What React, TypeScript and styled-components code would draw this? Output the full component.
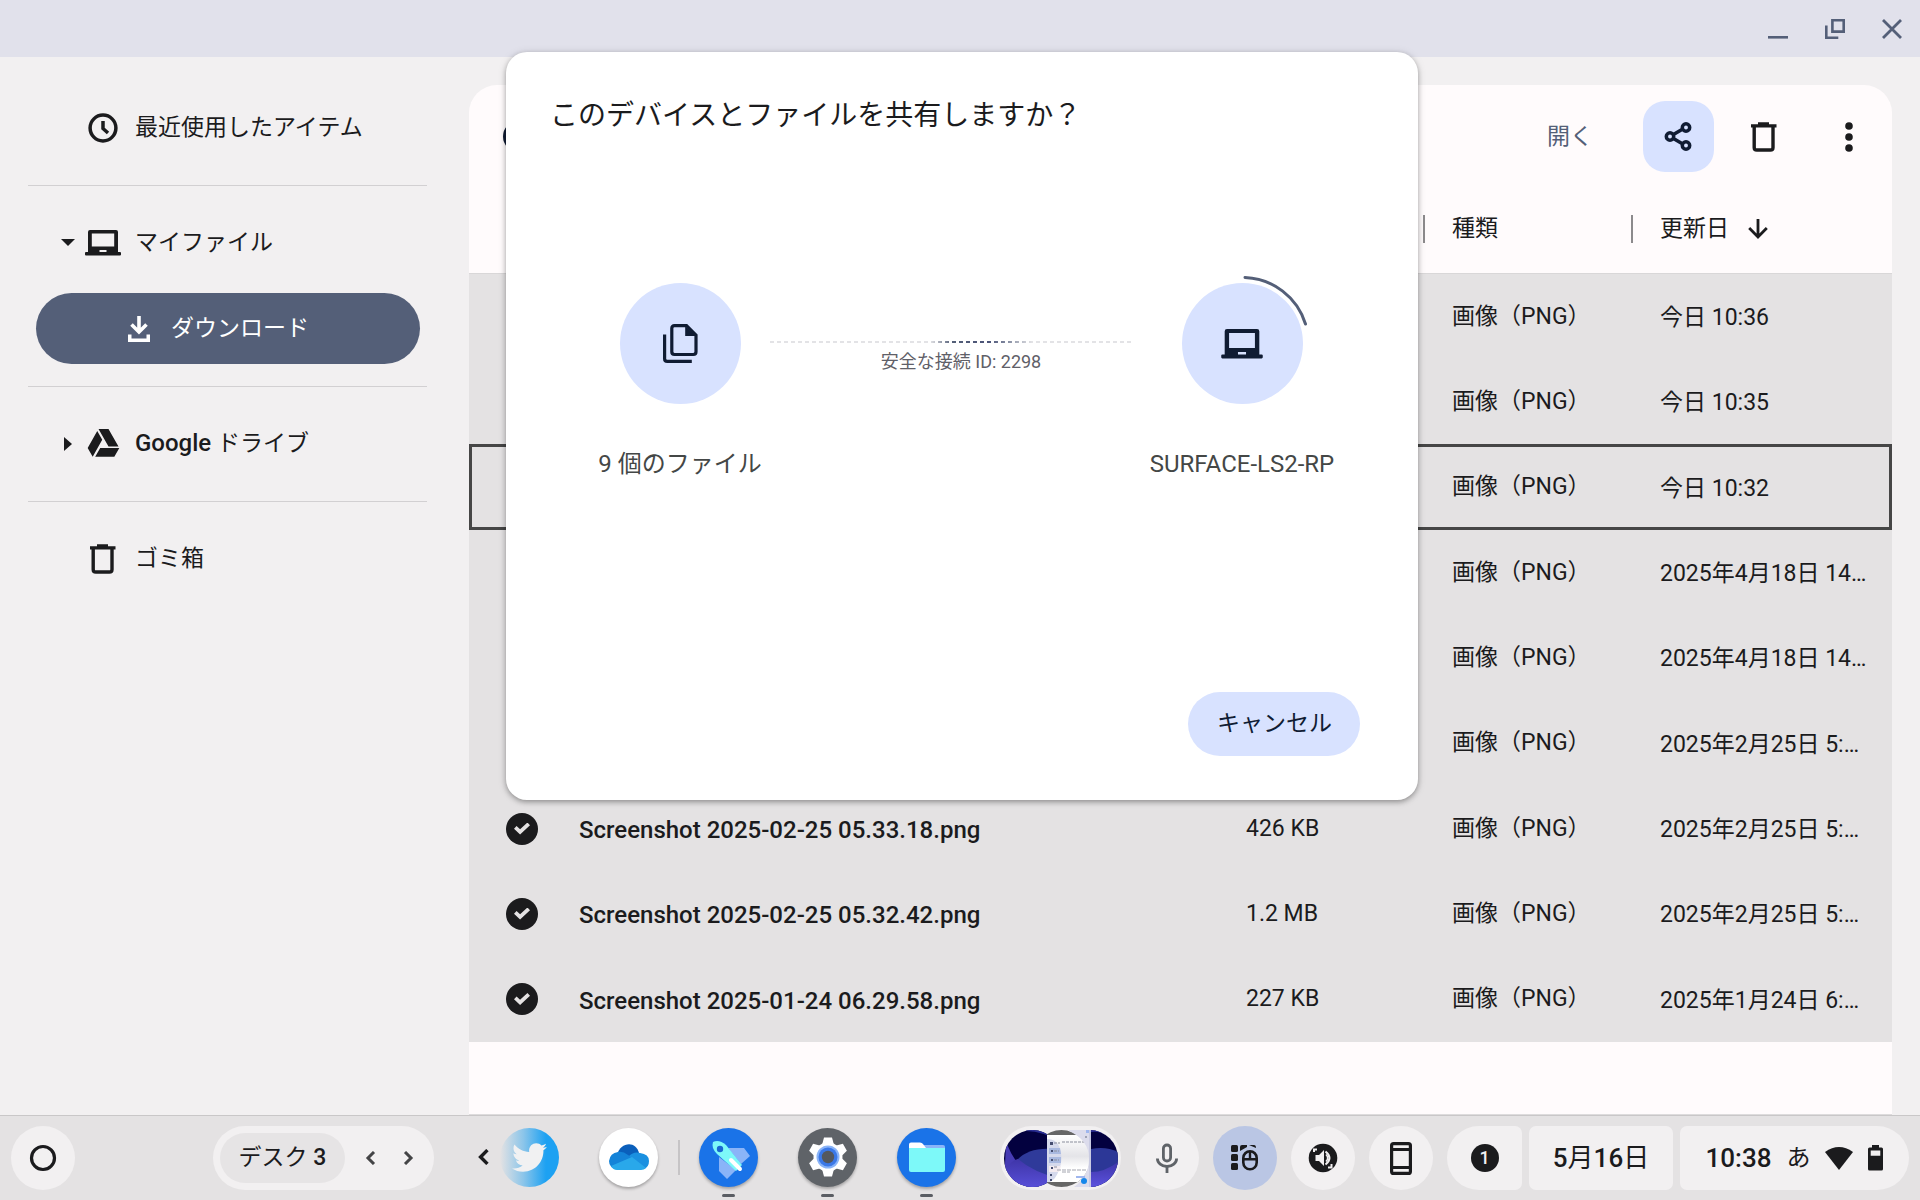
import React from "react";
import styled, { createGlobalStyle, css } from "styled-components";
import { FaTwitter } from "react-icons/fa";

const GlobalStyle = createGlobalStyle`
  *, *::before, *::after { box-sizing: border-box; }
  html, body { margin: 0; padding: 0; }
  body {
    background: #f2f0f1;
    color: #1b1b1d;
    font-family: Roboto, "Noto Sans CJK JP", sans-serif;
    font-size: 23px;
    line-height: 32px;
  }
  button {
    margin: 0; padding: 0; border: 0; background: none;
    color: inherit; font: inherit; cursor: pointer;
  }
  svg { display: block; flex: none; }
`;

/* ---------- window frame ---------- */

const Desktop = styled.div`
  position: relative;
  display: flex;
  flex-direction: column;
  min-height: 100vh;
  overflow: hidden;
`;

const TitleBar = styled.header`
  display: flex;
  justify-content: flex-end;
  height: 57px;
  background: #e1e1eb;
  color: #545f78;
`;

const WindowButton = styled.button`
  display: grid;
  place-items: center;
  width: 57px;
  height: 57px;
`;

const Body = styled.div`
  display: flex;
  flex: 1;
`;

/* ---------- sidebar ---------- */

const Sidebar = styled.nav`
  display: flex;
  flex-direction: column;
  flex: none;
  width: 469px;
  padding: 35px 42px 0 28px;
`;

const NavItem = styled.button<{ $nested?: boolean; $active?: boolean }>`
  display: flex;
  align-items: center;
  height: 71px;
  margin: 0 7px 0 8px;
  padding-left: ${(p) => (p.$nested ? 56 : 20)}px;
  border-radius: 36px;
  text-align: left;
  ${(p) =>
    p.$active &&
    css`
      margin-top: 15px;
      background: #545f78;
      color: #ffffff;
    `}
`;

const Expander = styled.span`
  display: grid;
  place-items: center;
  width: 24px;
  margin-right: 5px;
`;

const NavIcon = styled.span`
  display: grid;
  place-items: center;
  width: 36px;
  margin-right: 14px;
`;

const Divider = styled.hr`
  width: 100%;
  height: 1px;
  margin: 22px 0 21px;
  border: 0;
  background: #d2d0d2;
`;

const Medium = styled.span`
  font-weight: 500;
`;

const Brand = styled(Medium)`
  font-size: 24px;
`;

/* ---------- file panel ---------- */

const Panel = styled.main`
  flex: 1;
  min-width: 0;
  margin: 28px 28px 0 0;
  border-radius: 28px 28px 0 0;
  border-bottom: 1px solid #dddbdc;
  background: #fffbfc;
`;

const Toolbar = styled.div`
  display: flex;
  align-items: center;
  gap: 14px;
  padding: 16px 8px 12px 34px;
`;

const SelectionIcon = styled.span`
  margin-right: auto;
  color: #101c33;
`;

const OpenButton = styled.button`
  padding: 0 36px;
  color: #545f78;
`;

const ToolButton = styled.button<{ $active?: boolean }>`
  display: grid;
  place-items: center;
  width: 71px;
  height: 71px;
  border-radius: 22px;
  background: ${(p) => (p.$active ? "#d8e2ff" : "transparent")};
  color: ${(p) => (p.$active ? "#101c33" : "#1b1b1d")};
`;

const FileTable = styled.table`
  width: 100%;
  border-collapse: separate;
  border-spacing: 0;
  table-layout: fixed;
`;

const Col = styled.col<{ $width?: number }>`
  width: ${(p) => (p.$width ? `${p.$width}px` : "auto")};
`;

const HeadCell = styled.th`
  height: 90px;
  padding: 0;
  border-bottom: 1px solid #d9d7d8;
  font-weight: 400;
  text-align: left;
`;

const HeadContent = styled.div`
  display: flex;
  align-items: center;
  gap: 19px;
`;

const ResizeHandle = styled.span`
  width: 2px;
  height: 28px;
  margin: 0 27px 0 auto;
  background: #8c8a8c;
`;

const FileRow = styled.tr<{ $focused?: boolean }>`
  height: 85px;
  background: #e4e2e3;
  &:nth-child(3n) { height: 86px; }
  ${(p) =>
    p.$focused &&
    css`
      outline: 3px solid #464646;
      outline-offset: -3px;
    `}
`;

const Cell = styled.td`
  padding: 0;
  overflow: hidden;
  text-overflow: ellipsis;
  white-space: nowrap;
`;

const NameCell = styled(Cell)`
  padding-top: 3px;
  font-size: 24px;
  font-weight: 500;
`;

const DateCell = styled(Cell)`
  padding: 3px 24px 0 0;
`;

const RowCheck = styled.input`
  appearance: none;
  display: grid;
  place-items: center;
  width: 32px;
  height: 32px;
  margin: 0 0 0 37px;
  border-radius: 50%;
  background: #1b1b1d;
  &::after {
    content: "";
    width: 16px;
    height: 12px;
    background: #e4e2e3;
    clip-path: polygon(0 52%, 16% 30%, 38% 56%, 84% 0, 100% 22%, 38% 100%);
  }
`;

/* ---------- share dialog ---------- */

const Dialog = styled.section`
  position: absolute;
  top: 52px;
  left: calc(50% - 454px);
  display: flex;
  flex-direction: column;
  width: 912px;
  height: 748px;
  padding: 46px 58px 44px 44px;
  border-radius: 21px;
  background: #ffffff;
  box-shadow: 0 2px 5px rgba(0, 0, 0, 0.3), 0 1px 10px rgba(0, 0, 0, 0.12);
`;

const DialogTitle = styled.h1`
  margin: 0;
  font-size: 28px;
  font-weight: 400;
  line-height: 36px;
`;

const Transfer = styled.div`
  display: flex;
  justify-content: space-between;
  margin-top: 149px;
  padding: 0 12px 0 24px;
`;

const Endpoint = styled.div`
  display: flex;
  flex-direction: column;
  align-items: center;
  gap: 44px;
  width: 212px;
  color: #444746;
  font-size: 24px;
  white-space: nowrap;
`;

const Disc = styled.div`
  position: relative;
  display: grid;
  place-items: center;
  width: 121px;
  height: 121px;
  border-radius: 50%;
  background: #d8e2ff;
  color: #101c33;
`;

const Progress = styled.svg`
  position: absolute;
  top: -9px;
  left: -9px;
`;

const Link = styled.div`
  display: flex;
  flex: 1;
  flex-direction: column;
  align-items: center;
  gap: 7px;
  margin: 0 -16px;
  padding-top: 58px;
  color: #5f6068;
  font-size: 18px;
  line-height: 24px;
`;

const DashLine = styled.div`
  align-self: flex-start;
  width: 364px;
  height: 2px;
  background: linear-gradient(90deg, #e3e3e6 44%, #545f78 50%, #4b5378 60%, #8e95a8 66%, #e3e3e6 72%);
  mask-image: repeating-linear-gradient(90deg, #000 0 4px, transparent 4px 7px);
`;

const CancelButton = styled.button`
  align-self: flex-end;
  height: 64px;
  margin-top: auto;
  padding: 0 28px 0 29px;
  border-radius: 32px;
  background: #d8e2ff;
  color: #101c33;
`;

/* ---------- shelf ---------- */

const Shelf = styled.footer`
  display: flex;
  align-items: center;
  height: 85px;
  padding: 0 11px;
  border-top: 1px solid #c9c7c8;
  background: #e4e2e3;
  font-size: 26px;
`;

const RoundButton = styled.button<{ $active?: boolean }>`
  display: grid;
  place-items: center;
  flex: none;
  width: 64px;
  height: 64px;
  border-radius: 50%;
  background: ${(p) => (p.$active ? "#bac6e4" : "#f2f0f1")};
`;

const DeskSwitcher = styled.div`
  display: flex;
  align-items: center;
  width: 221px;
  height: 64px;
  margin-left: 138px;
  padding-left: 7px;
  border-radius: 32px;
  background: #f2f0f1;
  color: #444446;
`;

const DeskName = styled.button`
  width: 125px;
  height: 50px;
  margin-right: 7px;
  border-radius: 25px;
  background: #e6e4e5;
  color: #1b1b1d;
  font-size: 23px;
`;

const ArrowButton = styled.button`
  display: grid;
  place-items: center;
  width: 37px;
  height: 50px;
`;

const Apps = styled.div`
  display: flex;
  align-items: center;
  gap: 40px;
  margin: 0 0 2px 42px;
`;

const Scrollable = styled.div`
  display: flex;
  align-items: center;
  gap: 8px;
`;

const AppButton = styled.button<{ $color: string }>`
  position: relative;
  display: grid;
  place-items: center;
  flex: none;
  width: 59px;
  height: 59px;
  border-radius: 50%;
  background: ${(p) => p.$color};
  box-shadow: 0 2px 3px rgba(0, 0, 0, 0.28);
`;

const FadedApp = styled(AppButton)`
  box-shadow: none;
`;

const Running = styled.span`
  position: absolute;
  bottom: -10px;
  left: 23px;
  width: 13px;
  height: 3px;
  border-radius: 2px;
  background: #5a5d63;
`;

const Pinned = styled.div`
  display: flex;
  align-items: center;
  gap: 19px;
  margin-left: -20px;
`;

const ShelfRule = styled.span`
  width: 2px;
  height: 35px;
  background: #c6c4c6;
`;

const Tray = styled.div`
  display: flex;
  align-items: center;
  gap: 14px;
  margin-left: auto;
`;

const HoldingSpace = styled.button`
  display: grid;
  place-items: center;
  width: 121px;
  height: 64px;
  border-radius: 32px;
  background: #f2f0f1;
`;

const StatusGroup = styled.div`
  display: flex;
  gap: 7px;
`;

const StatusButton = styled.button<{ $width: number; $side?: "start" | "end" }>`
  display: flex;
  align-items: center;
  justify-content: center;
  gap: 15px;
  width: ${(p) => p.$width}px;
  height: 64px;
  border-radius: ${(p) =>
    p.$side === "start" ? "32px 7px 7px 32px" : p.$side === "end" ? "7px 32px 32px 7px" : "7px"};
  background: #f2f0f1;
  white-space: nowrap;
`;

const ImeMode = styled.span`
  font-size: 24px;
`;

const Count = styled.span`
  display: grid;
  place-items: center;
  width: 28px;
  height: 28px;
  border-radius: 50%;
  background: #1b1b1d;
  color: #f2f0f1;
  font-size: 18px;
  font-weight: 500;
  line-height: 28px;
`;

/* ---------- icons ---------- */

const TrashIcon = () => (
  <svg width="30" height="30" viewBox="0 0 30 30" fill="none" stroke="currentColor" strokeWidth="3.4">
    <path d="M5.2 4v21.4q0 2.6 2.6 2.6h13.600q2.600 0 2.600-2.600V4" />
    <path d="M2 3.900h25.500M9 1.900h11" />
  </svg>
);

const LaptopIcon = ({ width = 36, height = 26 }: { width?: number; height?: number }) => (
  <svg width={width} height={height} viewBox="0 0 36 26" fill="currentColor" fillRule="evenodd">
    <path d="M5 0h26q2 0 2 2v20h2q1 0 1 1v1.500q0 1-1 1H1q-1 0-1-1V23q0-1 1-1h2V2q0-2 2-2zm1.800 3.500v13h22.400v-13zM14.500 20v2h7v-2z" />
  </svg>
);

const Chevron = ({ flip, size = 14, weight = 3 }: { flip?: boolean; size?: number; weight?: number }) => (
  <svg width={size} height={size} viewBox="0 0 14 14" fill="none" stroke="currentColor" strokeWidth={weight}>
    <path d={flip ? "M4 1l6 6-6 6" : "M10 1L4 7l6 6"} />
  </svg>
);

const CheckDisc = () => (
  <svg width="31" height="31" viewBox="0 0 31 31">
    <circle cx="15.500" cy="15.500" r="15.500" fill="currentColor" />
    <path d="M9 16l5 5 9-10" fill="none" stroke="#fffbfc" strokeWidth="3" />
  </svg>
);

const ShareIcon = () => (
  <svg width="30" height="30" viewBox="1 1 30 30" fill="none" stroke="currentColor" strokeWidth="3.500">
    <path d="M7 15.500L21.500 7M7 15.500l14.500 8.500" />
    <circle cx="7" cy="15.500" r="3.700" fill="#d8e2ff" />
    <circle cx="23" cy="6.500" r="3.700" fill="#d8e2ff" />
    <circle cx="23" cy="24.500" r="3.700" fill="#d8e2ff" />
  </svg>
);

const FilesIcon = () => (
  <svg width="35" height="39" viewBox="0 0 35 39" fill="none" stroke="currentColor" strokeWidth="3.200">
    <path d="M1.600 10.500v24.200q0 2.700 2.700 2.700h24.500" />
    <path d="M11.500 1.600h12l9.500 9.500v16.700q0 2.700-2.700 2.700H11.500q-2.700 0-2.700-2.700V4.300q0-2.700 2.700-2.700z" />
    <path d="M22.200 2v10H33z" fill="currentColor" stroke="none" />
  </svg>
);

const HoldingPreview = () => (
  <svg width="114" height="57" viewBox="0 0 114 57">
    <defs>
      <clipPath id="left"><circle cx="28.500" cy="28.500" r="28.500" /></clipPath>
      <clipPath id="middle"><circle cx="57.500" cy="28.500" r="28.500" /></clipPath>
      <clipPath id="right"><circle cx="85.500" cy="28.500" r="28.500" /></clipPath>
      <linearGradient id="violet" x1="0" y1="0" x2="0" y2="1">
        <stop offset="0" stopColor="#3f35a8" />
        <stop offset="1" stopColor="#5b52de" />
      </linearGradient>
      <linearGradient id="fade" x1="0" y1="0" x2="0" y2="1">
        <stop offset="0" stopColor="#ffffff" />
        <stop offset="0.450" stopColor="#e4e4e8" />
        <stop offset="0.700" stopColor="#ffffff" />
      </linearGradient>
    </defs>
    <g clipPath="url(#right)">
      <path d="M87 0h27v57H87z" fill="#03013f" />
      <path d="M87 2q16-2 27 14V0H87z" fill="#2c2f96" />
      <path d="M87 19q15-3 27 3v35H87z" fill="#2c3797" />
      <path d="M87 42q14 0 27-10v25H87z" fill="url(#violet)" />
    </g>
    <g clipPath="url(#left)">
      <path d="M0 0h57v57H0z" fill="#03013f" />
      <path d="M22 1q18 0 35 12V0H22z" fill="#2a2f96" />
      <path d="M13 30q14-15 44-10v37H13z" fill="#2f3a9a" />
      <path d="M2 12q10 26 34 45H0z" fill="#463bb4" />
      <path d="M0 40q8-10 14-11 16 14 44 20v12H0z" fill="url(#violet)" />
    </g>
    <g clipPath="url(#middle)">
      <path d="M43 0h43v57H43z" fill="#666666" />
      <path d="M43 5h43v47H43z" fill="url(#fade)" />
    </g>
    <path d="M43 9q9 0 12 7 5 12 0 24-3 9-9 12h-3z" fill="#d5d9ec" />
    <path d="M45 18h11l1 6H45zM45 27h12v6H45z" fill="#a9b9e0" />
    <path d="M45 36h12q-1 4-2 6H45z" fill="#f3ebf0" />
    <path d="M46 12h3v3h-3zM47 20h2v2h-2zM47 29h2v2h-2zM47 37h2v2h-2zM46 44h2v2h-2zM46 49h2v2h-2z" fill="#454d70" />
    <path d="M50 13h6M50 21h5M50 30h5M50 37h4M58 12h23" stroke="#8a8e9c" strokeWidth="1.200" strokeDasharray="3 1" />
    <path d="M53 40h29M58 42h8" stroke="#a4a6b0" strokeWidth="1.200" strokeDasharray="4 1" />
    <path d="M65 0h20v57H70q15-10 15-28.500T65 1z" fill="#dcdcec" />
    <path d="M85 0h2v57h-2z" fill="#c9cbe2" />
    <path d="M82 0h3v3h-3zM72 46h9v2h-9z" fill="#9fb6ee" />
    <path d="M81 6h2v2h-2z" fill="#a0a3b4" />
    <circle cx="80" cy="51" r="3" fill="#1687ea" />
  </svg>
);

const OneDriveIcon = () => (
  <svg width="40" height="26" viewBox="0 0 40 26">
    <path d="M8 11C11-2 27-4 30 9l-12 8z" fill="#0a5fbb" />
    <path d="M9 8q5-1 10 3l9 6-12 8H8Q0 24 0 17 1 9 9 8z" fill="#1483d8" />
    <path d="M20 12q5-5 11-3 9 1 9 8 0 6-5 8z" fill="#1a90e0" />
    <path d="M2 22l21-9 14 11q-2 2-5 2H8q-4 0-6-4z" fill="#29a8ea" />
  </svg>
);

const RocketIcon = () => (
  <svg width="58" height="58" viewBox="0 0 58 58">
    <path d="M28 20h16l6 8-9 8zM19 29v14l8 8 9-9z" fill="#8ab4f8" />
    <path d="M13 14q6-3 13 3l16 20-6 6-19-17q-6-6-4-12z" fill="#7df9f9" />
    <path d="M31 32l9 9" stroke="#ffffff" strokeWidth="4" strokeLinecap="round" />
    <circle cx="20" cy="21" r="3.200" fill="#1967d2" />
  </svg>
);

const GearIcon = () => (
  <svg width="58" height="58" viewBox="0 0 58 58">
    <g fill="#ffffff">
      {[0, 60, 120].map((angle) => (
        <path key={angle} d="M25 9.500h8l2 7.500v24l-2 7.500h-8L23 41V17z" transform={`rotate(${angle} 29 29)`} />
      ))}
      <circle cx="29" cy="29" r="14.500" />
    </g>
    <circle cx="29" cy="29" r="11.500" fill="#8ab4f8" />
    <circle cx="29" cy="29" r="9.500" fill="#3b78e7" />
    <circle cx="29" cy="29" r="6.200" fill="#54585e" />
  </svg>
);

const FolderIcon = () => (
  <svg width="58" height="58" viewBox="0 0 58 58">
    <path d="M26 17h19q2 0 2 2v8H26z" fill="#8ab4f8" />
    <path d="M13 14.500h9q2 0 3 1.500l3 4v7H11V16.500q0-2 2-2z" fill="#ffffff" />
    <path d="M11 20h36v22q0 2-2 2H13q-2 0-2-2z" fill="#7df9f9" />
  </svg>
);

const MicIcon = () => (
  <svg width="24" height="30" viewBox="0 0 24 30" fill="none" stroke="#5f6368" strokeWidth="2.800">
    <rect x="8.400" y="2" width="7.200" height="16" rx="3.600" />
    <path d="M2.400 15.500a9.600 8 0 0 0 19.200 0M12 23.500V30" />
  </svg>
);

const MouseIcon = () => (
  <svg width="30" height="28" viewBox="0 0 30 28" fill="#1b1b1d">
    <rect x="1" y="1" width="7" height="7" rx="1.500" />
    <rect x="1" y="10" width="7" height="7" rx="1.500" />
    <rect x="1" y="19" width="7" height="7" rx="1.500" />
    <path d="M10 7V3q0-2 2-2h5v2zM19 1h5q2 0 2 3z" />
    <rect x="13.300" y="7.300" width="13.400" height="18" rx="6.700" fill="none" stroke="#1b1b1d" strokeWidth="2.600" />
    <path d="M12 14h16v2.400H12zM18.800 7h2.400v8h-2.400z" />
  </svg>
);

const SoundIcon = () => (
  <svg width="30" height="30" viewBox="0 0 30 30" fill="none">
    <circle cx="15" cy="15" r="14.300" fill="#1b1b1d" />
    <path d="M7.500 12h3.500l5-5v16l-5-5H7.500z" fill="#f2f0f1" />
    <path d="M17.500 8.500q8 6.500 0 13M6 9V6.500h3M20 24.500h3.500V21" stroke="#f2f0f1" strokeWidth="2" />
    <path d="M18 11.500q3.500 3.500 0 7" stroke="#f2f0f1" strokeWidth="1.600" />
  </svg>
);

const PhoneIcon = () => (
  <svg width="22" height="33" viewBox="0 0 22 33" fill="none" stroke="#1b1b1d" strokeWidth="3.200">
    <rect x="1.600" y="1.600" width="18.800" height="29.800" rx="2" />
    <path d="M2 7.500h18M2 25.500h18" strokeWidth="3" />
  </svg>
);

/* ---------- data ---------- */

type FileEntry = { id: number; name?: string; size?: string; date: string; focused?: boolean };

const files: FileEntry[] = [
  { id: 1, date: "今日 10:36" },
  { id: 2, date: "今日 10:35" },
  { id: 3, date: "今日 10:32", focused: true },
  { id: 4, date: "2025年4月18日 14:20" },
  { id: 5, date: "2025年4月18日 14:20" },
  { id: 6, date: "2025年2月25日 5:33" },
  { id: 7, name: "Screenshot 2025-02-25 05.33.18.png", size: "426 KB", date: "2025年2月25日 5:33" },
  { id: 8, name: "Screenshot 2025-02-25 05.32.42.png", size: "1.2 MB", date: "2025年2月25日 5:32" },
  { id: 9, name: "Screenshot 2025-01-24 06.29.58.png", size: "227 KB", date: "2025年1月24日 6:29" },
];

export default function App() {
  return (
    <Desktop>
      <GlobalStyle />
      <TitleBar>
        <WindowButton aria-label="最小化">
          <svg width="20" height="20" viewBox="0 0 20 20" fill="currentColor"><path d="M0 17h20v2.600H0z" /></svg>
        </WindowButton>
        <WindowButton aria-label="元のサイズに戻す">
          <svg width="20" height="20" viewBox="0 0 20 20" fill="none" stroke="currentColor" strokeWidth="2.600">
            <path d="M7.400 1.300h11.300v11.300H7.400zM1.300 6.500v12.200h12" />
          </svg>
        </WindowButton>
        <WindowButton aria-label="閉じる">
          <svg width="20" height="20" viewBox="0 0 20 20" stroke="currentColor" strokeWidth="2.800">
            <path d="M1 1l18 18M19 1L1 19" />
          </svg>
        </WindowButton>
      </TitleBar>

      <Body>
        <Sidebar>
          <NavItem>
            <Expander />
            <NavIcon>
              <svg width="30" height="30" viewBox="0 0 30 30" fill="none" stroke="currentColor" strokeWidth="3.500">
                <circle cx="15" cy="15" r="12.900" />
                <path d="M15 8v7.500l5 4.500" />
              </svg>
            </NavIcon>
            最近使用したアイテム
          </NavItem>
          <Divider />
          <NavItem>
            <Expander>
              <svg width="14" height="7" viewBox="0 0 14 7"><path d="M0 0h14L7 7z" fill="currentColor" /></svg>
            </Expander>
            <NavIcon><LaptopIcon /></NavIcon>
            マイファイル
          </NavItem>
          <NavItem $nested $active>
            <Expander />
            <NavIcon>
              <svg width="22" height="26" viewBox="0 0 22 26" fill="none" stroke="currentColor" strokeWidth="3.600">
                <path d="M11 0v15.500M3.500 8.500L11 16l7.500-7.500" />
                <path d="M1.700 18.500v5.800h18.600v-5.800" />
              </svg>
            </NavIcon>
            ダウンロード
          </NavItem>
          <Divider />
          <NavItem>
            <Expander>
              <svg width="8" height="14" viewBox="0 0 8 14"><path d="M0 0v14l8-7z" fill="currentColor" /></svg>
            </Expander>
            <NavIcon>
              <svg width="35" height="35" viewBox="0 0 24 24" fill="currentColor">
                <path d="M7.710 3.500L1.150 15l3.430 6 6.550-11.500M9.730 15L6.300 21h13.120l3.430-6M22.280 14L15.420 2H8.580l6.850 12z" />
              </svg>
            </NavIcon>
            <span><Brand>Google</Brand> ドライブ</span>
          </NavItem>
          <Divider />
          <NavItem>
            <Expander />
            <NavIcon><TrashIcon /></NavIcon>
            ゴミ箱
          </NavItem>
        </Sidebar>

        <Panel>
          <Toolbar>
            <SelectionIcon><CheckDisc /></SelectionIcon>
            <OpenButton>開く</OpenButton>
            <ToolButton $active aria-label="共有"><ShareIcon /></ToolButton>
            <ToolButton aria-label="削除"><TrashIcon /></ToolButton>
            <ToolButton aria-label="その他">
              <svg width="8" height="30" viewBox="0 0 8 30" fill="currentColor">
                <circle cx="4" cy="4" r="3.800" /><circle cx="4" cy="15" r="3.800" /><circle cx="4" cy="26" r="3.800" />
              </svg>
            </ToolButton>
          </Toolbar>
          <FileTable>
            <colgroup>
              <Col $width={110} /><Col /><Col $width={206} /><Col $width={208} /><Col $width={232} />
            </colgroup>
            <thead>
              <tr>
                <HeadCell />
                <HeadCell />
                <HeadCell><HeadContent><ResizeHandle /></HeadContent></HeadCell>
                <HeadCell scope="col"><HeadContent>種類<ResizeHandle /></HeadContent></HeadCell>
                <HeadCell scope="col">
                  <HeadContent>
                    更新日
                    <svg width="20" height="20" viewBox="0 0 20 20" fill="none" stroke="currentColor" strokeWidth="2.800">
                      <path d="M10 0v18M1.200 9l8.800 9 8.800-9" />
                    </svg>
                  </HeadContent>
                </HeadCell>
              </tr>
            </thead>
            <tbody>
              {files.map((file) => (
                <FileRow key={file.id} $focused={file.focused}>
                  <Cell>
                    <RowCheck type="checkbox" defaultChecked aria-label={file.name ?? `${file.id}`} />
                  </Cell>
                  <NameCell>{file.name}</NameCell>
                  <Cell>{file.size}</Cell>
                  <Cell>画像（PNG）</Cell>
                  <DateCell>{file.date}</DateCell>
                </FileRow>
              ))}
            </tbody>
          </FileTable>
        </Panel>
      </Body>

      <Shelf>
        <RoundButton aria-label="ランチャー">
          <svg width="28" height="28" viewBox="0 0 28 28"><circle cx="14" cy="14" r="11.500" fill="none" stroke="#1b1b1d" strokeWidth="3.200" /></svg>
        </RoundButton>
        <DeskSwitcher>
          <DeskName>デスク <Medium>3</Medium></DeskName>
          <ArrowButton aria-label="前のデスク"><Chevron /></ArrowButton>
          <ArrowButton aria-label="次のデスク"><Chevron flip /></ArrowButton>
        </DeskSwitcher>
        <Apps>
          <Scrollable>
            <button aria-label="前へスクロール"><Chevron size={16} weight={3} /></button>
            <FadedApp $color="linear-gradient(90deg, rgba(29,161,242,0) 0%, rgba(29,161,242,0.450) 40%, #1da1f2 78%)" aria-label="Twitter">
              <FaTwitter size={35} color="#f1f1f2" />
            </FadedApp>
          </Scrollable>
          <AppButton $color="#ffffff" aria-label="OneDrive"><OneDriveIcon /></AppButton>
          <Pinned>
            <ShelfRule />
            <AppButton $color="#1a73e8" aria-label="使い方・ヒント"><RocketIcon /><Running /></AppButton>
          </Pinned>
          <AppButton $color="#5f6368" aria-label="設定"><GearIcon /><Running /></AppButton>
          <AppButton $color="#1a73e8" aria-label="ファイル"><FolderIcon /><Running /></AppButton>
        </Apps>
        <Tray>
          <HoldingSpace aria-label="クイックアクセス"><HoldingPreview /></HoldingSpace>
          <RoundButton aria-label="音声入力"><MicIcon /></RoundButton>
          <RoundButton $active aria-label="ゲーム コントロール"><MouseIcon /></RoundButton>
          <RoundButton aria-label="音量"><SoundIcon /></RoundButton>
          <RoundButton aria-label="スマートフォン ハブ"><PhoneIcon /></RoundButton>
          <StatusGroup>
            <StatusButton $width={75} $side="start" aria-label="通知"><Count>1</Count></StatusButton>
            <StatusButton $width={144}>
              <span><Medium>5</Medium>月<Medium>16</Medium>日</span>
            </StatusButton>
            <StatusButton $width={229} $side="end">
              <Medium>10:38</Medium>
              <ImeMode>あ</ImeMode>
              <svg width="28" height="23" viewBox="0 0 28 23"><path d="M0 5Q14-5 28 5L14 23z" fill="#1b1b1d" /></svg>
              <svg width="15" height="26" viewBox="0 0 15 26" fill="#1b1b1d" fillRule="evenodd">
                <path d="M4 0h7v2.500h2.500Q15 2.500 15 4v20q0 1.500-1.500 1.500h-12Q0 25.500 0 24V4q0-1.500 1.500-1.500H4zM2.700 5.500v5.300h9.600V5.500z" />
              </svg>
            </StatusButton>
          </StatusGroup>
        </Tray>
      </Shelf>

      <Dialog role="dialog" aria-labelledby="share-title">
        <DialogTitle id="share-title">このデバイスとファイルを共有しますか？</DialogTitle>
        <Transfer>
          <Endpoint>
            <Disc><FilesIcon /></Disc>
            9 個のファイル
          </Endpoint>
          <Link>
            <DashLine />
            安全な接続 ID: 2298
          </Link>
          <Endpoint>
            <Disc>
              <LaptopIcon width={42} height={30} />
              <Progress width="139" height="139" viewBox="0 0 139 139" fill="none" stroke="#545f78" strokeWidth="3">
                <path d="M72 3.500A66 66 0 0 1 132.500 50" strokeLinecap="round" />
              </Progress>
            </Disc>
            SURFACE-LS2-RP
          </Endpoint>
        </Transfer>
        <CancelButton>キャンセル</CancelButton>
      </Dialog>
    </Desktop>
  );
}
